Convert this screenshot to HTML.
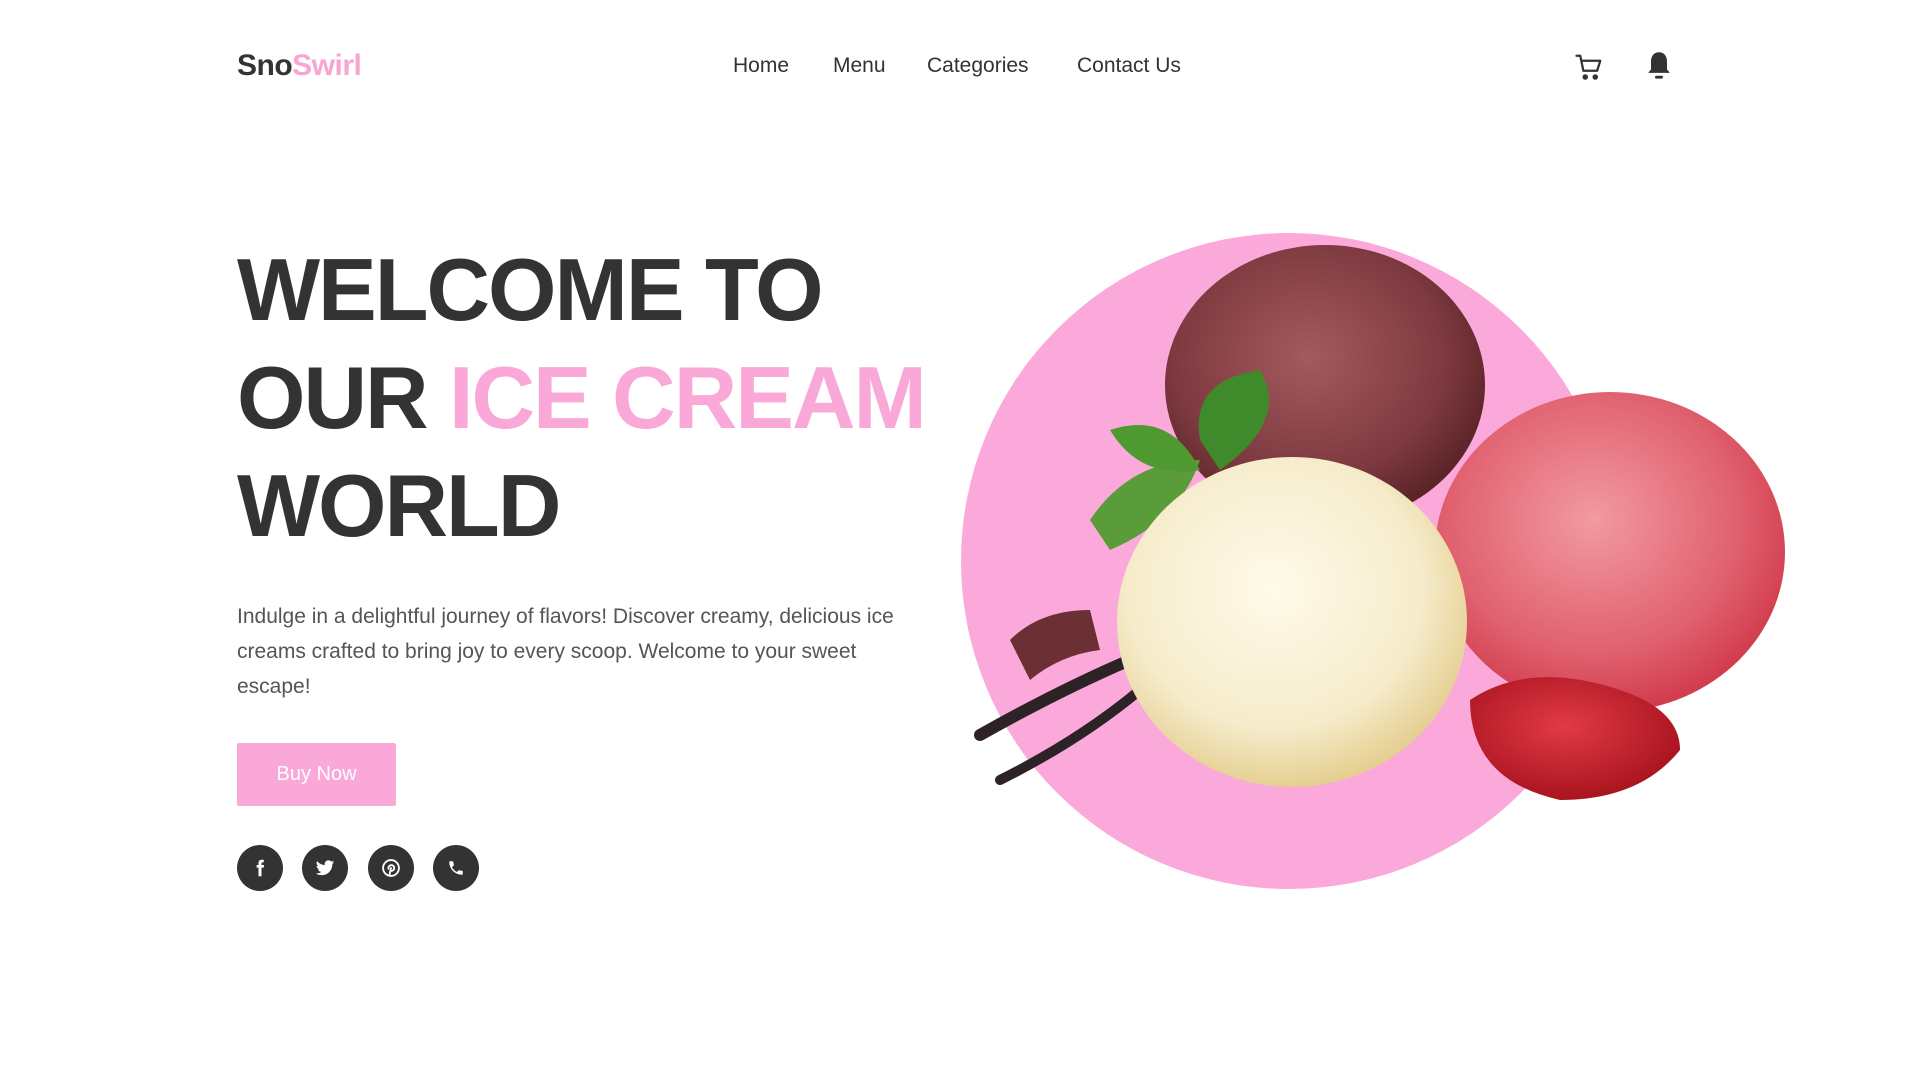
<!DOCTYPE html>
<html><head><meta charset="utf-8"><style>
*{margin:0;padding:0;box-sizing:border-box}
body{width:1920px;height:1080px;background:#fff;font-family:"Liberation Sans",sans-serif;position:relative;overflow:hidden;color:#333}
.logo{position:absolute;left:237px;top:49px;font-size:30px;font-weight:bold;color:#333;letter-spacing:-0.5px}
.logo span{color:#f8a5d1}
.nav{position:absolute;top:54px;font-size:21px;color:#333}
h1{position:absolute;left:237px;top:236px;font-size:88px;line-height:108px;font-weight:bold;letter-spacing:-2px;color:#333}
h1 span{color:#f9a8d8}
p{position:absolute;left:237px;top:599px;width:690px;font-size:21px;line-height:35px;color:#555}
.btn{position:absolute;left:237px;top:743px;width:159px;height:63px;background:#f9a8d8;color:#fff;font-size:20px;text-align:center;line-height:63px;border-radius:2px}
.ic{position:absolute;top:845px;width:46px;height:46px;border-radius:50%;background:#333;display:flex;align-items:center;justify-content:center}
</style></head><body>
<div class="logo">Sno<span>Swirl</span></div>
<div class="nav" style="left:733px">Home</div>
<div class="nav" style="left:833px">Menu</div>
<div class="nav" style="left:927px">Categories</div>
<div class="nav" style="left:1077px">Contact Us</div>
<svg style="position:absolute;left:1574px;top:52px" width="30" height="30" viewBox="0 0 24 24" fill="none" stroke="#333" stroke-width="1.8" stroke-linecap="round" stroke-linejoin="round"><path d="M2 3h3l2.5 12h11L21 7H6.5"/><circle cx="9" cy="20" r="1.3" fill="#333"/><circle cx="17" cy="20" r="1.3" fill="#333"/></svg>
<svg style="position:absolute;left:1645px;top:50px" width="28" height="32" viewBox="0 0 24 28"><path d="M12 2c-4.5 0-7 3.5-7 8v7l-2.5 3h19L19 17v-7c0-4.5-2.5-8-7-8z" fill="#333"/><rect x="8.5" y="22.5" width="7" height="2.5" rx="1.2" fill="#333"/></svg>
<h1>WELCOME TO<br>OUR <span>ICE CREAM</span><br>WORLD</h1>
<p>Indulge in a delightful journey of flavors! Discover creamy, delicious ice creams crafted to bring joy to every scoop. Welcome to your sweet escape!</p>
<div class="btn">Buy Now</div>
<div class="ic" style="left:237px"><svg width="18" height="18" viewBox="0 0 24 24"><path d="M14 8V6c0-1 .5-1.5 1.5-1.5H17V1h-3c-3 0-4 2-4 4.5V8H7.5v3.5H10V23h4V11.5h3l.5-3.5z" fill="#fff"/></svg></div>
<div class="ic" style="left:302px"><svg width="20" height="20" viewBox="0 0 24 24"><path d="M23 5c-.8.4-1.7.6-2.6.7.9-.6 1.6-1.4 2-2.5-.9.5-1.9.9-2.9 1.1A4.5 4.5 0 0 0 11.8 8.4 12.8 12.8 0 0 1 2.5 3.7a4.5 4.5 0 0 0 1.4 6c-.7 0-1.4-.2-2-.6 0 2.2 1.5 4 3.6 4.4-.7.2-1.4.2-2 .1.6 1.8 2.2 3.1 4.2 3.1A9 9 0 0 1 1 18.6 12.8 12.8 0 0 0 8 20.6c8.3 0 12.8-6.9 12.8-12.8v-.6c.9-.6 1.6-1.4 2.2-2.2z" fill="#fff"/></svg></div>
<div class="ic" style="left:368px"><svg width="20" height="20" viewBox="0 0 24 24" fill="none" stroke="#fff" stroke-width="2.2"><circle cx="12" cy="12" r="9.5"/><path d="M10 21l2-9M9 13a3.5 3.5 0 1 1 4 2.5" stroke-linecap="round"/></svg></div>
<div class="ic" style="left:433px"><svg width="18" height="18" viewBox="0 0 24 24"><path d="M6.6 10.8a15.5 15.5 0 0 0 6.6 6.6l2.2-2.2c.3-.3.7-.4 1-.2 1.1.4 2.3.6 3.6.6.6 0 1 .4 1 1V20c0 .6-.4 1-1 1A17 17 0 0 1 3 4c0-.6.4-1 1-1h3.5c.6 0 1 .4 1 1 0 1.3.2 2.5.6 3.6.1.3 0 .7-.2 1z" fill="#fff"/></svg></div>

<svg style="position:absolute;left:0;top:0" width="1920" height="1080">
<defs>
<radialGradient id="ch" cx="45%" cy="40%" r="60%"><stop offset="0" stop-color="#a45a5e"/><stop offset=".7" stop-color="#7e3a40"/><stop offset="1" stop-color="#5a2428"/></radialGradient>
<radialGradient id="st" cx="45%" cy="40%" r="60%"><stop offset="0" stop-color="#f29aa2"/><stop offset=".7" stop-color="#e0606e"/><stop offset="1" stop-color="#d23d4e"/></radialGradient>
<radialGradient id="va" cx="45%" cy="40%" r="60%"><stop offset="0" stop-color="#fffaea"/><stop offset=".7" stop-color="#f6eccb"/><stop offset="1" stop-color="#e5cf92"/></radialGradient>
<radialGradient id="fr" cx="45%" cy="40%" r="60%"><stop offset="0" stop-color="#e23a45"/><stop offset="1" stop-color="#a8141f"/></radialGradient>
</defs>
<circle cx="1289" cy="561" r="328" fill="#fba9da"/>
<ellipse cx="1325" cy="385" rx="160" ry="140" fill="url(#ch)"/>
<ellipse cx="1610" cy="552" rx="175" ry="160" fill="url(#st)"/>
<path d="M980 735 Q1060 690 1130 660" stroke="#2d2326" stroke-width="12" fill="none" stroke-linecap="round"/>
<path d="M1000 780 Q1080 740 1140 690" stroke="#2d2326" stroke-width="10" fill="none" stroke-linecap="round"/>
<path d="M1010 640 q30-30 80-30 l10 40 q-40 5-70 30z" fill="#6a3034"/>
<path d="M1090 520 q40-60 110-60 q-20 60-90 90z" fill="#5a9c3a"/>
<path d="M1110 430 q60-20 90 40 q-60 10-90-40z" fill="#4e9a30"/>
<path d="M1200 440 q-10-60 60-70 q30 50-40 100z" fill="#3f8a2a"/>
<ellipse cx="1292" cy="622" rx="175" ry="165" fill="url(#va)"/>
<path d="M1470 700 q60-40 150-10 q60 20 60 60 q-40 50-120 50 q-90-20-90-100z" fill="url(#fr)"/>
</svg>
</body></html>
